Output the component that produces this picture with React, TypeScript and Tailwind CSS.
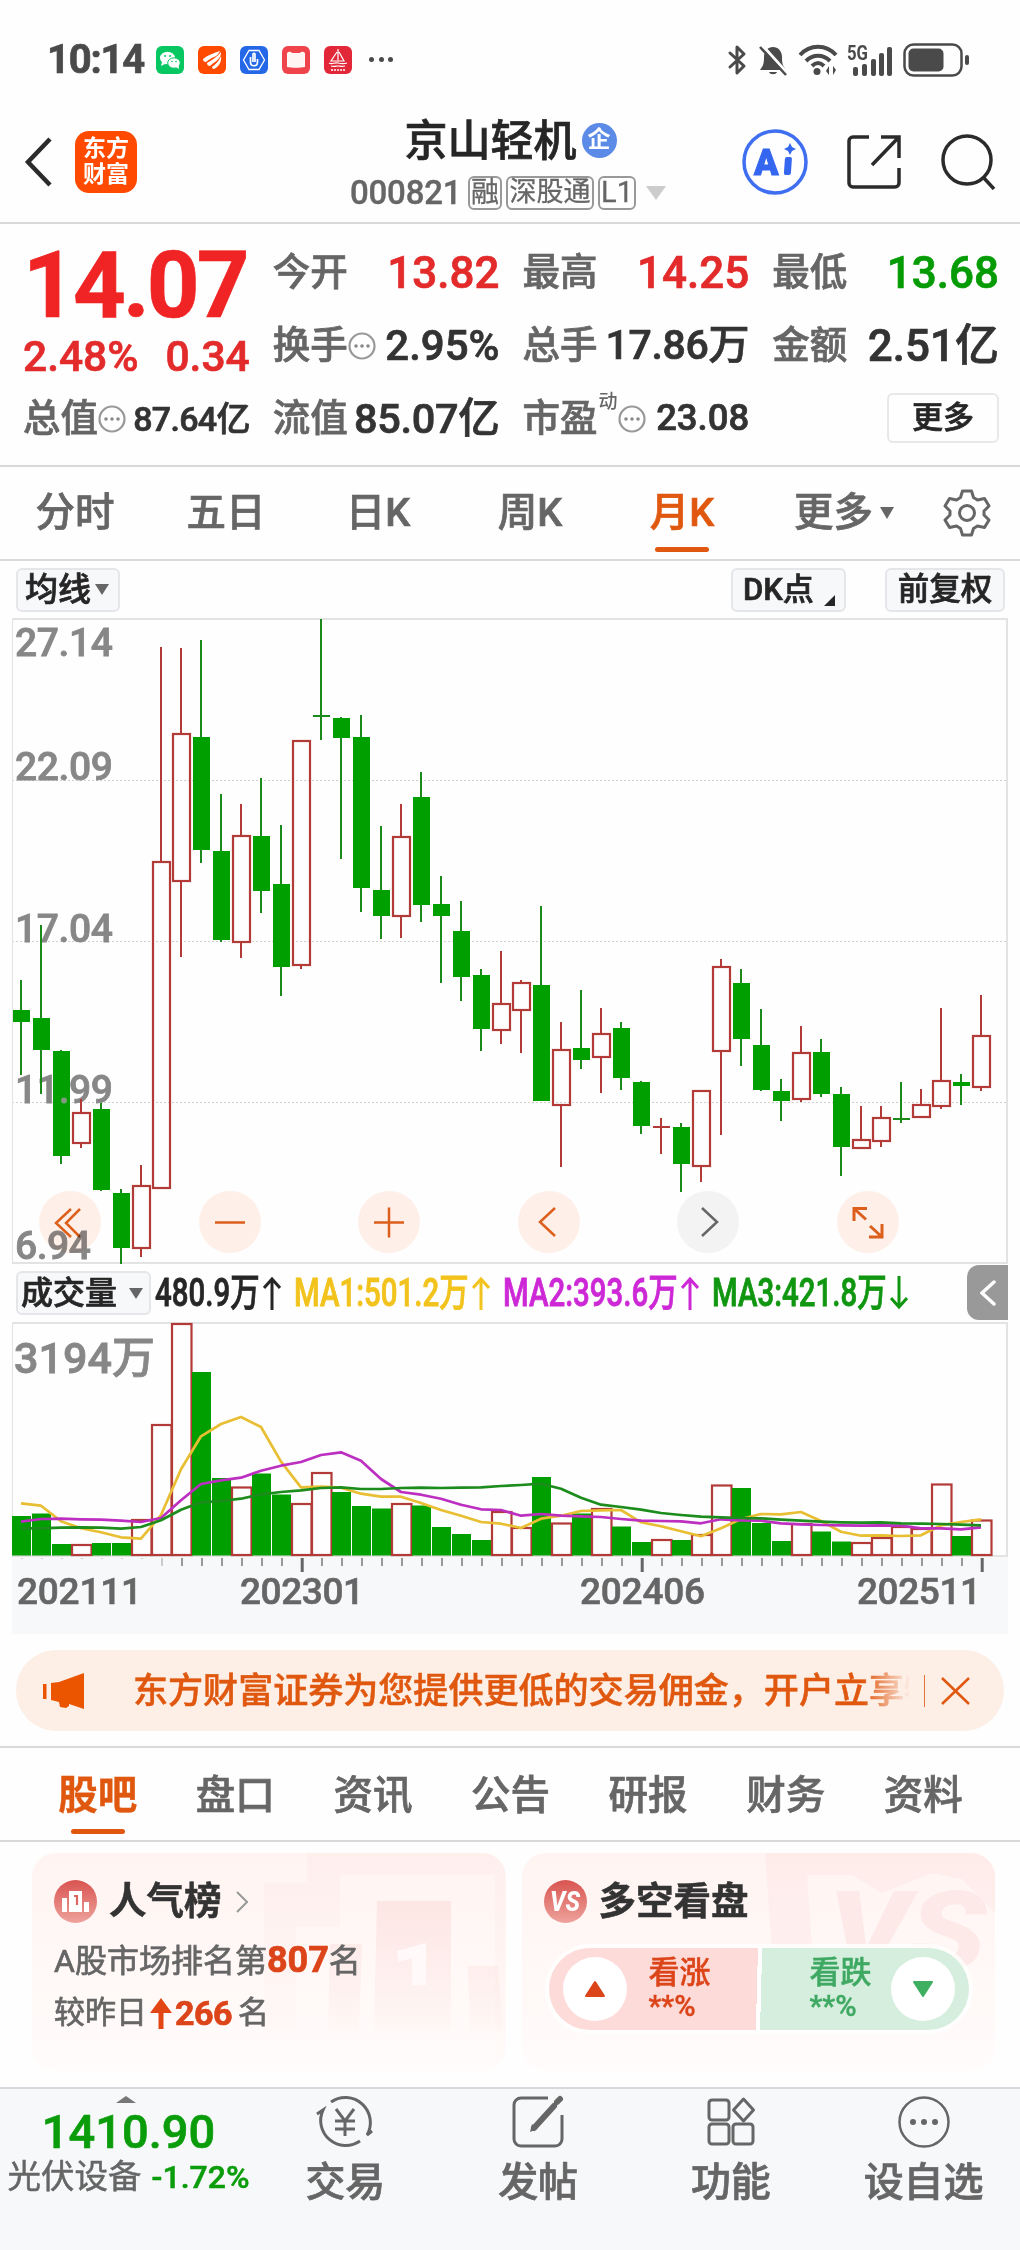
import React from "react";

type Candle = [up: number, high: number, top: number, bottom: number, low: number];

// [1 = up / 0 = down, high, body top, body bottom, low] in chart pixels
const candles: Candle[] = [
  [0, 362, 392, 404, 457],
  [0, 307, 400, 432, 476],
  [0, 432, 433, 538, 546],
  [1, 481, 494, 526, 530],
  [0, 485, 491, 572, 573],
  [0, 571, 575, 630, 646],
  [1, 547, 567, 631, 639],
  [1, 29, 243, 571, 571],
  [1, 30, 115, 264, 339],
  [0, 22, 119, 232, 245],
  [0, 176, 233, 322, 324],
  [1, 186, 217, 325, 340],
  [0, 160, 218, 273, 295],
  [0, 207, 266, 349, 378],
  [1, 122, 122, 348, 351],
  [0, 1, 97, 98, 122],
  [0, 99, 100, 120, 241],
  [0, 97, 119, 270, 294],
  [0, 208, 272, 298, 321],
  [1, 186, 218, 299, 320],
  [0, 154, 179, 287, 304],
  [0, 258, 286, 298, 365],
  [0, 283, 313, 359, 383],
  [0, 351, 357, 411, 433],
  [1, 333, 385, 413, 426],
  [1, 362, 364, 393, 435],
  [0, 288, 367, 483, 483],
  [1, 404, 431, 488, 549],
  [0, 372, 430, 442, 451],
  [1, 390, 415, 440, 475],
  [0, 404, 410, 460, 472],
  [0, 463, 464, 508, 516],
  [1, 500, 508, 509, 536],
  [0, 505, 509, 546, 574],
  [1, 472, 472, 549, 564],
  [1, 341, 348, 434, 517],
  [0, 351, 365, 421, 448],
  [0, 391, 427, 472, 473],
  [0, 461, 473, 483, 503],
  [1, 408, 434, 482, 484],
  [0, 421, 434, 476, 479],
  [0, 469, 476, 529, 558],
  [1, 488, 521, 531, 531],
  [1, 488, 499, 524, 529],
  [0, 464, 500, 501, 505],
  [1, 471, 486, 500, 500],
  [1, 390, 462, 489, 491],
  [0, 456, 464, 468, 487],
  [1, 377, 417, 470, 473],
];

// [1 = up / 0 = down, bar top]
const volumes: [number, number][] = [
  [0, 194], [0, 191.5], [0, 222], [1, 222], [0, 221], [0, 221], [1, 197], [1, 102],
  [1, 1], [0, 50], [0, 156], [1, 164.5], [0, 151.5], [0, 172.5], [1, 181], [1, 150],
  [0, 170], [0, 184], [0, 186.5], [1, 181], [0, 183.5], [0, 205], [0, 212], [0, 218],
  [1, 189], [1, 205], [0, 155], [1, 200.5], [0, 191.5], [1, 186], [0, 204.5], [0, 220],
  [1, 217], [0, 218], [1, 212], [1, 162.5], [0, 166], [0, 201], [0, 219], [1, 201],
  [0, 209.5], [0, 219.5], [1, 220], [1, 215], [1, 204], [1, 206], [1, 161.5], [0, 214],
  [1, 197.5],
];

const ma1 = [
  580, 587, 634, 655, 667, 682, 686, 615, 478, 379, 342, 321, 351, 455, 532, 530, 533, 551, 560,
  560, 579, 600, 617, 636, 641, 654, 626, 617, 603, 601, 600, 637, 649, 664, 679, 655, 627, 612,
  613, 606, 633, 665, 677, 676, 678, 676, 646, 636, 628,
];
const ma2 = [
  635, 627, 626, 628, 629, 632, 636, 624, 571, 522, 511, 503, 482, 467, 456, 435, 427, 452, 507,
  546, 554, 566, 584, 598, 600, 617, 612, 617, 619, 621, 627, 632, 633, 634, 640, 628, 631, 632,
  640, 643, 645, 646, 647, 646, 647, 655, 655, 658, 652,
];
const ma3 = [
  655, 655, 653, 652, 653, 656, 651, 631, 599, 577, 573, 566, 553, 546, 541, 534, 532, 537, 537,
  534, 533, 534, 533, 532, 528, 525, 521, 536, 563, 584, 591, 599, 609, 615, 620, 622, 624, 625,
  629, 632, 635, 637, 638, 637, 640, 641, 642, 644, 646,
];

const linePoints = (values: number[]) =>
  values.map((v, i) => `${9 + i * 20},${(v / 3 - 12).toFixed(1)}`).join(" ");

const RED = "#b23b38";
const GREEN = "#009f00";

const StatusBar = () => (
  <div className="h-[88px] pl-[47px] pr-[50px] pt-[31px] flex items-center text-[#4a4a4a]">
    <span className="text-[40px] font-bold tracking-[-1.2px] leading-none w-[109px]">10:14</span>
    <div className="flex gap-[14px]">
      <svg width="28" height="28" viewBox="0 0 28 28">
        <rect width="28" height="28" rx="6" fill="#07c763" />
        <ellipse cx="11.5" cy="12" rx="7.5" ry="6.3" fill="#fff" />
        <path d="M6 16l-1 4 4-2z" fill="#fff" />
        <ellipse cx="18" cy="17" rx="6.3" ry="5.2" fill="#fff" stroke="#07c763" strokeWidth="1" />
        <path d="M20 21l3 2-.5-4z" fill="#fff" />
        <g fill="#07c763">
          <circle cx="9" cy="10" r="1" />
          <circle cx="14" cy="10" r="1" />
          <circle cx="16" cy="15.5" r=".8" />
          <circle cx="20" cy="15.5" r=".8" />
        </g>
      </svg>
      <svg width="28" height="28" viewBox="0 0 28 28">
        <rect width="28" height="28" rx="6" fill="#ff4a00" />
        <path d="M5 13C10 9 16 7 22 5c-1 2-3 5-6 6-4 2-6 3-8 5-2 0-3-1-3-3z" fill="#fff" />
        <path d="M9 17c5-3 10-6 14-11 0 5-3 8-6 10s-4 3-5 4c-2 0-3-1-3-3z" fill="#fff" />
        <path d="M14 21c4-3 7-6 9-11 1 5-2 11-7 13-1 0-2-1-2-2z" fill="#fff" />
      </svg>
      <svg width="28" height="28" viewBox="0 0 28 28">
        <rect width="28" height="28" rx="6" fill="#2468e8" />
        <path d="M9 4.500h10l5.500 9.500L19 23.500H9L3.500 14z" fill="none" stroke="#fff" strokeWidth="1.300" />
        <path d="M10.500 11v5c0 5 7 5 7 0v-3M13 16V8.500c0-1.500 2-1.500 2 0V16" fill="none" stroke="#fff" strokeWidth="1.700" />
      </svg>
      <svg width="28" height="28" viewBox="0 0 28 28">
        <rect width="28" height="28" rx="6" fill="#f0444c" />
        <path d="M5 7c2-2 4-1 5 0h8c1-1 3-2 5 0v14c-5 1-13 1-18 0z" fill="#fff5f2" />
      </svg>
      <svg width="28" height="28" viewBox="0 0 28 28">
        <rect width="28" height="28" rx="6" fill="#e22838" />
        <path d="M14 3v13M13 6l-6 9h6M15 6l5 9h-5M5 17c3 2 5-1 9 0s6 1 9 0M7 20c3 1 5 0 7 0s4 1 7 0" fill="none" stroke="#fff" strokeWidth="1.200" />
        <path d="M7 24h14" stroke="#fff" strokeWidth="1.600" strokeDasharray="2 1" />
      </svg>
    </div>
    <div className="flex gap-[4.500px] ml-[17px]">
      <i className="size-[5px] rounded-full bg-[#4a4a4a]" />
      <i className="size-[5px] rounded-full bg-[#4a4a4a]" />
      <i className="size-[5px] rounded-full bg-[#4a4a4a]" />
    </div>
    <div className="ml-auto flex items-center">
      <svg width="22" height="32" viewBox="0 0 22 32" fill="none" stroke="#4a4a4a" strokeWidth="3" strokeLinejoin="round" strokeLinecap="round">
        <path d="M3 9l14 13-7 7V3l7 7L3 23" />
      </svg>
      <svg className="ml-[8px]" width="32" height="32" viewBox="0 0 32 32">
        <path d="M7 13c0-6 4-10 9-10s9 4 9 10c0 7 1 9 4 13H3c3-4 4-6 4-13z" fill="#4a4a4a" />
        <path d="M12 28h8c-1 3-7 3-8 0z" fill="#4a4a4a" />
        <path d="M5 1l26 29" stroke="#fefefe" strokeWidth="3" />
        <path d="M3 3l26 28" stroke="#4a4a4a" strokeWidth="2.500" />
      </svg>
      <svg className="ml-[8px]" width="42" height="32" viewBox="0 0 42 32" fill="none" stroke="#4a4a4a" strokeWidth="4">
        <path d="M3 11C13 0 29 0 39 11M9 17c7-7 17-7 24 0M15 22c4-4 8-4 12 0" />
        <circle cx="20" cy="27.500" r="3.500" fill="#4a4a4a" stroke="none" />
        <path d="M29 27l3-5v9zM39 26l-3 5v-9z" fill="#4a4a4a" stroke="none" />
      </svg>
      <svg className="ml-[8px] overflow-visible" width="48" height="34" viewBox="0 -2 48 34">
        <text x="0" y="15" fontSize="20" fontWeight="700" fill="#4a4a4a" textLength="21" lengthAdjust="spacingAndGlyphs">5G</text>
        <g fill="#4a4a4a">
          <rect x="6" y="22" width="5" height="9" rx="2" />
          <rect x="15" y="19" width="5" height="12" rx="2" />
          <rect x="24" y="14" width="5" height="17" rx="2" />
          <rect x="32" y="8" width="5" height="23" rx="2" />
          <rect x="40" y="2" width="5" height="29" rx="2" />
        </g>
      </svg>
      <svg className="ml-[8px]" width="67" height="34" viewBox="0 0 67 34">
        <rect x="1.500" y="1.500" width="57" height="31" rx="9" fill="none" stroke="#4a4a4a" strokeWidth="2.500" />
        <rect x="5.500" y="5.500" width="35" height="23" rx="5" fill="#4a4a4a" />
        <rect x="62" y="12" width="4" height="10" rx="2" fill="#4a4a4a" />
      </svg>
    </div>
  </div>
);

const badge = "h-[34px] shrink-0 border-2 border-[#999] rounded-[6px] flex items-center justify-center leading-none whitespace-nowrap [-webkit-text-stroke:0.300px]";

const Header = () => (
  <header className="h-[136px] border-b-2 border-[#d9d9d9] px-6 flex items-center justify-between">
    <div className="flex items-center gap-[22px] w-[319px] pt-[14px]">
      <svg width="29" height="50" viewBox="0 0 29 50" fill="none" stroke="#2b2b2b" strokeWidth="4.500">
        <path d="M26 2L4 25l22 23" />
      </svg>
      <div className="size-[62px] rounded-[14px] bg-[#ff4a00] text-white text-[23px] font-bold leading-[26px] flex flex-col items-center justify-center [-webkit-text-stroke:0px]">
        <span>东方</span>
        <span>财富</span>
      </div>
    </div>
    <div className="flex flex-col items-center w-[320px] pt-[15px]">
      <div className="flex items-center gap-[5px] pl-[2px]">
        <h1 className="text-[43px] leading-[50px] font-medium text-[#262626]">京山轻机</h1>
        <span className="size-[35px] rounded-full bg-[#5b8be6] text-white text-[23px] font-bold leading-[33px] text-center [-webkit-text-stroke:0px]">企</span>
      </div>
      <div className="flex items-center gap-[4px] mt-[10px] mr-[3px] text-[#666]">
        <span className="w-[111px] text-[33px] leading-[34px] font-medium tracking-[-.2px] mr-[3px] [-webkit-text-stroke:0.400px]">000821</span>
        <span className={`${badge} w-[34px] text-[28px]`}>融</span>
        <span className={`${badge} w-[88px] text-[27px]`}>深股通</span>
        <span className={`${badge} w-[38px] text-[29px]`}>L1</span>
        <svg className="ml-[6px]" width="20" height="14" viewBox="0 0 20 14"><path d="M0 0h20L10 14z" fill="#ccc" /></svg>
      </div>
    </div>
    <div className="flex items-center justify-end gap-[39px] w-[320px] pt-[14px]">
      <svg width="66" height="66" viewBox="0 0 66 66">
        <circle cx="33" cy="33" r="31" fill="none" stroke="#3f6ff0" strokeWidth="3.500" />
        <text x="12" y="46" fontSize="36" fontWeight="900" fill="#3566f0" stroke="#3566f0">A</text>
        <rect x="42" y="28" width="7" height="18" rx="2" fill="#3566f0" transform="skewX(-4) translate(3 0)" />
        <path d="M48 14l2 4 4 2-4 2-2 4-2-4-4-2 4-2z" fill="#3566f0" />
      </svg>
      <svg width="54" height="56" viewBox="0 0 54 56" fill="none" stroke="#2b2b2b" strokeWidth="3.500">
        <path d="M22 3H6a4 4 0 0 0-4 4v42a4 4 0 0 0 4 4h42a4 4 0 0 0 4-4V34M34 3h18v21M52 3L25 31" />
      </svg>
      <svg width="56" height="56" viewBox="0 0 56 56" fill="none" stroke="#2b2b2b" strokeWidth="3.500">
        <circle cx="27" cy="26" r="24" />
        <path d="M43 43l11 12" />
      </svg>
    </div>
  </header>
);

const Dots = () => (
  <svg className="shrink-0" width="28" height="28" viewBox="0 0 28 28">
    <circle cx="14" cy="14" r="12.500" fill="none" stroke="#999" strokeWidth="2.200" />
    <g fill="#888">
      <circle cx="8" cy="14" r="1.800" />
      <circle cx="14" cy="14" r="1.800" />
      <circle cx="20" cy="14" r="1.800" />
    </g>
  </svg>
);

type StatProps = { label: string; value: string; tone?: string; dots?: boolean };

const Stat = ({ label, value, tone = "text-[#333] text-[42px]", dots }: StatProps) => (
  <div className="flex items-center justify-between whitespace-nowrap pt-[2px]">
    <span className="flex items-center text-[37.500px] text-[#666] font-medium">
      {label}
      {dots && <Dots />}
    </span>
    <span className={`font-medium ${tone}`}>{value}</span>
  </div>
);

const Quote = () => (
  <section className="h-[243px] border-b-2 border-[#d9d9d9] pl-[23px] pr-[21px] pt-[11px] grid grid-cols-4 grid-rows-[73px_73px_73px] gap-x-[23px] leading-none">
    <div className="row-span-2 text-[#e32b2b] whitespace-nowrap">
      <div className="text-[92px] leading-[92px] mt-[5px] font-bold text-[#f02424] tracking-[-2.800px]">14.07</div>
      <div className="flex justify-between text-[42.500px] font-medium mt-[4px]">
        <span>2.48%</span>
        <span>0.34</span>
      </div>
    </div>
    <Stat label="今开" value="13.82" tone="text-[#e32b2b] text-[44px]" />
    <Stat label="最高" value="14.25" tone="text-[#e32b2b] text-[44px]" />
    <Stat label="最低" value="13.68" tone="text-[#059b05] text-[44px]" />
    <Stat label="换手" value="2.95%" dots />
    <Stat label="总手" value="17.86万" tone="text-[#333] text-[41px] tracking-[-.3px]" />
    <Stat label="金额" value="2.51亿" tone="text-[#333] text-[44px]" />
    <Stat label="总值" value="87.64亿" tone="text-[#333] text-[34px] tracking-[-.7px]" dots />
    <Stat label="流值" value="85.07亿" tone="text-[#333] text-[41.500px] tracking-[-.3px]" />
    <div className="flex items-center justify-between pt-[2px]">
      <span className="flex items-center text-[37.500px] text-[#666] font-medium">
        市盈
        <sup className="text-[19px] top-[-17px] ml-[1px] [-webkit-text-stroke:0px]">动</sup>
        <Dots />
      </span>
      <span className="text-[36.500px] font-medium text-[#333]">23.08</span>
    </div>
    <div className="flex items-center justify-end">
      <button className="w-[112px] h-[50px] border-2 border-[#e8e8e8] rounded-[6px] text-[31px] font-medium text-[#262626]">更多</button>
    </div>
  </section>
);

const PeriodTabs = () => (
  <nav className="h-[94px] border-b-2 border-[#d9d9d9] pr-[17px] grid grid-cols-[150px_152px_152px_152px_152px_172px_1fr] items-center justify-items-center text-[39.500px] font-medium text-[#666] leading-none">
    <span>分时</span>
    <span>五日</span>
    <span>日K</span>
    <span>周K</span>
    <span className="relative text-[#e0580f]">
      月K
      <i className="absolute left-1/2 -translate-x-1/2 top-[54px] w-[54px] h-[5px] rounded-full bg-[#e0580f]" />
    </span>
    <span className="flex items-center gap-[7px]">
      更多
      <svg width="14" height="12" viewBox="0 0 14 12"><path d="M0 0h14L7 12z" fill="#666" /></svg>
    </span>
    <svg width="48" height="48" viewBox="0 0 48 48" fill="none" stroke="#666" strokeWidth="3">
      <path strokeLinejoin="round" d="M19.500 2h9l2 6.500 4 2.500 7-1.500 4.500 7.500-5 5v4l5 5-4.500 7.500-7-1.500-4 2.500-2 6.500h-9l-2-6.500-4-2.500-7 1.500L2 31l5-5v-4l-5-5 4.500-7.500 7 1.500 4-2.500z" />
      <circle cx="24" cy="24" r="7.500" />
    </svg>
  </nav>
);

const chip = "border-2 border-[#e5e6ea] bg-[#f7f8fa] rounded-[6px] flex items-center text-[#262626] font-medium leading-none whitespace-nowrap";

const priceLabels: [string, number][] = [
  ["27.14", 38],
  ["22.09", 162],
  ["17.04", 324],
  ["11.99", 485],
  ["6.94", 641],
];

const CandleChart = () => (
  <div className="relative h-[646px] ml-[12px] w-[996px]">
    <svg width="996" height="646" viewBox="0 0 996 646">
      <g stroke="#cfcfcf" strokeDasharray="2 2" strokeWidth="1">
        <path d="M0 162.500h996M0 323.500h996M0 484.500h996" />
      </g>
      <path d="M0 1h996M0 645h996M995 0v646" stroke="#e3e3e3" strokeWidth="2" />
      <path d="M.5 0v646" stroke="#e3e3e3" />
      <g fontSize="39" fontWeight="500" fill="#878787" stroke="#878787" strokeWidth=".8">
        {priceLabels.map(([label, y]) => (
          <text key={label} x="3" y={y} textLength={label.length === 5 ? 98 : 76}>{label}</text>
        ))}
      </g>
      {candles.map(([up, high, top, bottom, low], i) => {
        const x = 9 + i * 20;
        const flat = bottom - top <= 1;
        if (!up || flat) {
          const color = up ? RED : flat ? "#1b8a1b" : GREEN;
          return (
            <g key={i}>
              <rect x={x - 1} y={high} width="2" height={low - high} fill={up ? RED : "#1b8a1b"} />
              <rect x={x - 8} y={top} width="17" height={Math.max(2, bottom - top)} fill={color} />
            </g>
          );
        }
        return (
          <g key={i}>
            <rect x={x - 1} y={high} width="2" height={top - high} fill={RED} />
            <rect x={x - 1} y={bottom} width="2" height={low - bottom} fill={RED} />
            <rect x={x - 8} y={top + 1} width="17" height={bottom - top - 2} fill="none" stroke={RED} strokeWidth="2.200" />
          </g>
        );
      })}
      {/* the decimal point stays readable over the third candle */}
      <circle cx="52" cy="482.500" r="3" fill="#7f9a7f" />
    </svg>
    <div className="absolute left-[27px] bottom-[11px] flex gap-[97.600px]">
      {[
        "M32 18L17 32l15 14M41 18L27 32l14 14",
        "M16 31.500h30",
        "M16 31.500h30M31 16.500v30",
        "M37 17L22 31l15 14",
        "M25 17l15 14-15 14",
        "M17 30V17.500h13M17 17.500l12 11M33 35l12 11M45 33v13H32",
      ].map((d, i) => (
        <svg
          key={i}
          className={i === 4 ? "size-[62px] rounded-full bg-[#f3f3f3]" : "size-[62px] rounded-full bg-[#fff1ea] mix-blend-multiply"}
          viewBox="0 0 62 62"
          fill="none"
          stroke={i === 4 ? "#666" : "#dd5f1c"}
          strokeWidth={i === 5 ? 3 : 2.5}
        >
          <path d={d} />
        </svg>
      ))}
    </div>
  </div>
);

type MaProps = { text: string; width: string; tone: string; down?: boolean };

const Ma = ({ text, width, tone, down }: MaProps) => (
  <span className={`flex items-center justify-between ${width} ${tone}`}>
    <span className="w-0 whitespace-nowrap">
      <span className="inline-block origin-left scale-x-[.765] text-[38.500px] font-medium [-webkit-text-stroke:0.800px]">{text}</span>
    </span>
    <svg width="18" height="34" viewBox="0 0 18 34" fill="none" stroke="currentColor" strokeWidth="3">
      <path d={down ? "M9 0v31M1 22l8 9 8-9" : "M9 34V3M1 12l8-9 8 9"} />
    </svg>
  </span>
);

const VolumeBar = () => (
  <div className="h-[58px] pl-[16px] pr-[12px] flex items-center leading-none">
    <div className={`${chip} w-[135px] h-[44px] pl-[3px] text-[32px]`}>
      成交量
      <svg className="ml-[12px]" width="14" height="11" viewBox="0 0 14 11"><path d="M0 0h14L7 11z" fill="#666" /></svg>
    </div>
    <Ma text="480.9万" width="w-[126px] ml-[4px]" tone="text-[#262626]" />
    <Ma text="MA1:501.2万" width="w-[196px] ml-[13px]" tone="text-[#f2c31c]" />
    <Ma text="MA2:393.6万" width="w-[196px] ml-[13px]" tone="text-[#cd28d6]" />
    <Ma text="MA3:421.8万" width="w-[196px] ml-[13px]" tone="text-[#109610]" down />
    <div className="ml-auto mt-[-1px] w-[41px] h-[55px] rounded-l-[12px] bg-[#999] flex items-center justify-center">
      <svg width="16" height="26" viewBox="0 0 16 26" fill="none" stroke="#fff" strokeWidth="3.500" strokeLinecap="round">
        <path d="M14 2L2 13l12 11" />
      </svg>
    </div>
  </div>
);

const VolumeChart = () => (
  <div className="ml-[12px] w-[996px] h-[312px] bg-[#f7f8fa]">
    <svg width="996" height="312" viewBox="0 0 996 312">
      <rect width="996" height="235" fill="#fefefe" />
      <path d="M0 1h996M995 0v234M0 234h996" stroke="#e3e3e3" strokeWidth="2" fill="none" />
      <path d="M.5 0v234" stroke="#e3e3e3" />
      <text x="2" y="51" fontSize="43" fontWeight="500" fill="#878787" stroke="#878787" strokeWidth=".8" textLength="141">3194万</text>
      {volumes.map(([up, top], i) =>
        up ? (
          <rect key={i} x={i * 20} y={top + 1} width="19.500" height={232 - top} fill="#fefefe" stroke={RED} strokeWidth="2.200" />
        ) : (
          <rect key={i} x={i * 20} y={top} width="19" height={233.5 - top} fill={GREEN} />
        ),
      )}
      <g fill="none" strokeWidth="2.700" strokeLinejoin="round">
        <polyline points={linePoints(ma1)} stroke="#e8be32" />
        <polyline points={linePoints(ma2)} stroke="#bc2fc0" />
        <polyline points={linePoints(ma3)} stroke="#1c8c1c" />
      </g>
      {volumes.map((_, i) => {
        const major = i === 14 || i === 31 || i === 48;
        return (
          <rect
            key={i}
            x={major ? 8.7 + i * 20 : 9 + i * 20}
            y="236"
            width={major ? 3 : 2}
            height={major ? 14 : i < 7 ? 1 : 8}
            fill={major ? "#666" : i < 8 ? "#ccc" : "#999"}
          />
        );
      })}
      <g fontSize="37" fontWeight="500" fill="#666" stroke="#666" strokeWidth=".6">
        <text x="5" y="282" textLength="125">202111</text>
        <text x="228" y="282" textLength="124">202301</text>
        <text x="568" y="282" textLength="125">202406</text>
        <text x="845" y="282" textLength="124">202511</text>
      </g>
    </svg>
  </div>
);

const Notice = () => (
  <div className="mx-[16px] mt-[16px] h-[81px] rounded-full bg-[#fdeee6] flex items-center pl-[26px] pr-[34px]">
    <svg width="43" height="36" viewBox="0 0 43 36" fill="#ec5500">
      <rect x="1" y="11" width="3.500" height="15" />
      <path d="M9 10l8-1L42 0v36l-15-5v2l-3 2-6-1-1-5-8-2z" />
    </svg>
    <div className="ml-[48px] w-[777px] overflow-hidden whitespace-nowrap text-[35.050px] leading-[54px] font-medium text-[#e0580f] [-webkit-text-stroke:0.500px] [mask-image:linear-gradient(to_right,black_94%,transparent_100%)]">
      东方财富证券为您提供更低的交易佣金，开户立享特
    </div>
    <i className="ml-[14px] w-px h-[32px] bg-[#e0733a]" />
    <svg className="ml-[16px] shrink-0" width="29" height="28" viewBox="0 0 29 28" stroke="#e0580f" strokeWidth="2.500">
      <path d="M1 1l27 26M28 1L1 27" />
    </svg>
  </div>
);

const InfoTabs = () => (
  <nav className="mt-[15px] h-[96px] border-y-2 border-[#d9d9d9] pl-[29px] pr-[28px] pt-[3px] grid grid-cols-7 items-center text-center text-[39.500px] font-medium text-[#666] leading-none">
    <span className="relative font-bold text-[#e0580f] [-webkit-text-stroke:0.400px]">
      股吧
      <i className="absolute left-1/2 -translate-x-1/2 top-[53px] w-[54px] h-[5px] rounded-full bg-[#e0580f]" />
    </span>
    <span>盘口</span>
    <span>资讯</span>
    <span>公告</span>
    <span>研报</span>
    <span>财务</span>
    <span>资料</span>
  </nav>
);

const Cards = () => (
  <section className="h-[245px] pl-[32px] pr-[25px] pt-[11px] grid grid-cols-2 gap-[16px] leading-none">
    <div className="relative h-[218px] rounded-[24px] overflow-hidden bg-linear-to-b from-[#fff4f2] to-[#fffcfb] pl-[22px] pt-[27px]">
      <svg className="absolute inset-0" width="473" height="218" viewBox="0 0 473 218">
        <defs>
          <linearGradient id="fade" x1="0" y1="0" x2="0" y2="1">
            <stop offset="0" stopColor="#fbdcd9" stopOpacity=".75" />
            <stop offset="1" stopColor="#fbdcd9" stopOpacity=".12" />
          </linearGradient>
        </defs>
        <path d="M275 0h198v218h-10V22H308v52h-44v104h-32V30h43z" fill="url(#fade)" opacity=".3" />
        <path d="M345 48h74v130h-77zM298 91h32l-3 87h-31zM436 113h30l5 65h-33z" fill="url(#fade)" opacity=".8" />
        <path d="M365 98l29-8v42h-14v-27l-14 4z" fill="#fffaf9" />
      </svg>
      <div className="relative flex items-center">
        <svg width="43" height="43" viewBox="0 0 43 43">
          <defs>
            <linearGradient id="badge" x1="0" y1="0" x2="0" y2="1">
              <stop offset="0" stopColor="#d95450" />
              <stop offset="1" stopColor="#eea29c" />
            </linearGradient>
          </defs>
          <circle cx="21.500" cy="21.500" r="21.500" fill="url(#badge)" />
          <path d="M8 18h5v14H8zM15 11h13v21H15zM30 22h5v10h-5z" fill="#fff" />
          <path d="M20 16h3v9" fill="none" stroke="#dc6560" strokeWidth="2.200" />
        </svg>
        <h2 className="ml-[12px] text-[37.500px] font-bold text-[#333] [-webkit-text-stroke:0.500px]">人气榜</h2>
        <svg className="ml-[14px]" width="12" height="22" viewBox="0 0 12 22" fill="none" stroke="#999" strokeWidth="2"><path d="M1 1l10 10L1 21" /></svg>
      </div>
      <p className="relative mt-[20px] text-[32px] leading-[34px] text-[#666]">
        A股市场排名第<b className="text-[36px] text-[#dc4419]">807</b>名
      </p>
      <p className="relative mt-[18px] text-[31px] leading-[34px] text-[#666] flex items-center">
        较昨日
        <svg className="mx-[3px]" width="22" height="32" viewBox="0 0 22 32" fill="#e24615"><path d="M11 1l11 15H13.500v16h-5V16H0z" /></svg>
        <b className="text-[34px] text-[#dc4419] mr-[6px] tracking-[-.5px]">266</b>名
      </p>
    </div>

    <div className="relative h-[218px] rounded-[24px] overflow-hidden bg-linear-to-b from-[#fff4f2] to-[#fffcfb] pl-[22px] pt-[27px]">
      <svg className="absolute inset-0" width="473" height="218" viewBox="0 0 473 218">
        <path d="M243 0h230v60L440 26 410 20 360 40 330 22H285l5 75h-40z" fill="#fbdcd9" opacity=".3" />
        <text x="306" y="116" fontSize="110" fontWeight="900" fontStyle="italic" fill="#fbdfdc" opacity=".55" textLength="158" lengthAdjust="spacingAndGlyphs">VS</text>
      </svg>
      <div className="relative flex items-center">
        <svg width="43" height="43" viewBox="0 0 43 43">
          <circle cx="21.500" cy="21.500" r="21.500" fill="url(#badge)" />
          <text x="6" y="31" fontSize="27" fontWeight="800" fontStyle="italic" fill="#fff" textLength="30" lengthAdjust="spacingAndGlyphs">VS</text>
        </svg>
        <h2 className="ml-[12px] text-[37.500px] font-bold text-[#333] [-webkit-text-stroke:0.500px]">多空看盘</h2>
      </div>
      <div className="relative mt-[21px] ml-[1px] w-[428px] h-[90px] rounded-full bg-white/80 p-[4px]">
        <div className="h-full rounded-full overflow-hidden bg-[linear-gradient(91.500deg,#fddbd8_49.500%,#fff_49.500%,#fff_50.500%,#d5eedd_50.500%)] flex items-center justify-between px-[14px]">
          <div className="flex items-center">
            <span className="size-[64px] rounded-full bg-white flex items-center justify-center">
              <svg width="22" height="18" viewBox="0 0 22 18"><path d="M11 2l9 14H2z" fill="#dc4419" stroke="#dc4419" strokeWidth="2" strokeLinejoin="round" /></svg>
            </span>
            <span className="ml-[22px] text-[31px] font-medium text-[#dc4419] [-webkit-text-stroke:0.400px]">
              看涨
              <span className="block mt-[4px] text-[29px]">**%</span>
            </span>
          </div>
          <div className="flex items-center">
            <span className="mr-[19px] text-[31px] font-medium text-[#3fa963] [-webkit-text-stroke:0.400px]">
              看跌
              <span className="block mt-[4px] text-[29px]">**%</span>
            </span>
            <span className="size-[64px] rounded-full bg-white flex items-center justify-center">
              <svg width="22" height="18" viewBox="0 0 22 18"><path d="M11 16L2 2h18z" fill="#3fb061" stroke="#3fb061" strokeWidth="2" strokeLinejoin="round" /></svg>
            </span>
          </div>
        </div>
      </div>
    </div>
  </section>
);

const BottomBar = () => (
  <footer className="h-[165px] border-t-2 border-[#d5d9dd] bg-[#f7f8fa] flex text-[#666] leading-none">
    <div className="w-[249px] pl-[8px] pt-[7px] flex flex-col items-center whitespace-nowrap">
      <svg className="mr-[6px]" width="20" height="7" viewBox="0 0 20 7"><path d="M10 0l10 7H0z" fill="#777" /></svg>
      <div className="mt-[5px] text-[47px] font-medium text-[#0b9c0b]">1410.90</div>
      <div className="mt-[5px] flex items-center gap-[10px] text-[33.500px] [-webkit-text-stroke:0.500px]">
        光伏设备<span className="text-[32px] font-medium text-[#0b9c0b]">-1.72%</span>
      </div>
    </div>
    <div className="w-[771px] pt-[6px] grid grid-cols-4 text-[40px] font-medium text-center">
      <div>
        <svg className="mx-auto" width="60" height="54" viewBox="0 0 60 54" fill="none" stroke="#666" strokeWidth="3">
          <path d="M16 7a25 25 0 0 1 36 33l5-4M45 46A25 25 0 0 1 8 15l-6 4" />
          <path d="M21 14l9 12 9-12M20 26h20M20 34h20M30 26v15" />
        </svg>
        <div className="mt-[14px]">交易</div>
      </div>
      <div>
        <svg className="mx-auto" width="52" height="54" viewBox="0 0 52 54" fill="none" stroke="#666" strokeWidth="3">
          <path d="M36 3H9a7 7 0 0 0-7 7v34a7 7 0 0 0 7 7h34a7 7 0 0 0 7-7V20" />
          <path d="M42 11L22 33M48 4l-3 3" strokeWidth="6" strokeLinecap="round" />
          <path d="M20 29l-2 8 7-3z" fill="#666" stroke="none" />
        </svg>
        <div className="mt-[14px]">发帖</div>
      </div>
      <div>
        <svg className="mx-auto" width="52" height="54" viewBox="0 0 52 54" fill="none" stroke="#666" strokeWidth="3">
          <rect x="4" y="5" width="20" height="20" rx="3" />
          <rect x="4" y="29" width="20" height="20" rx="3" />
          <rect x="28" y="29" width="20" height="20" rx="3" />
          <path d="M38.500 4l10 11-10 11-10-11z" strokeLinejoin="round" />
        </svg>
        <div className="mt-[14px]">功能</div>
      </div>
      <div>
        <svg className="mx-auto" width="54" height="54" viewBox="0 0 54 54">
          <circle cx="27" cy="27" r="24.500" fill="none" stroke="#666" strokeWidth="2.500" />
          <g fill="#666">
            <circle cx="16" cy="27" r="3" />
            <circle cx="27" cy="27" r="3" />
            <circle cx="38" cy="27" r="3" />
          </g>
        </svg>
        <div className="mt-[14px]">设自选</div>
      </div>
    </div>
  </footer>
);

const App = (): React.JSX.Element => {
  return (
    <div className="w-[1020px] h-[2250px] overflow-hidden bg-[#fefefe] font-[Roboto,'Noto_Sans_CJK_SC',sans-serif] [-webkit-text-stroke:0.700px]">
      <StatusBar />
      <Header />
      <Quote />
      <PeriodTabs />
      <div className="h-[57px] pl-[16px] pr-[15px] flex items-center">
        <div className={`${chip} w-[104px] h-[44px] pl-[7px] text-[33px]`}>
          均线
          <svg className="ml-[4px]" width="14" height="11" viewBox="0 0 14 11"><path d="M0 0h14L7 11z" fill="#666" /></svg>
        </div>
        <div className={`${chip} ml-auto w-[115px] h-[44px] pl-[10px] text-[31px]`}>
          DK点
          <svg className="ml-[10px] mt-[22px]" width="11" height="11" viewBox="0 0 11 11"><path d="M11 0v11H0z" fill="#262626" /></svg>
        </div>
        <div className={`${chip} ml-[39px] w-[120px] h-[44px] justify-center text-[31.500px]`}>前复权</div>
      </div>
      <CandleChart />
      <VolumeBar />
      <VolumeChart />
      <Notice />
      <InfoTabs />
      <Cards />
      <BottomBar />
    </div>
  );
};

export default App;
